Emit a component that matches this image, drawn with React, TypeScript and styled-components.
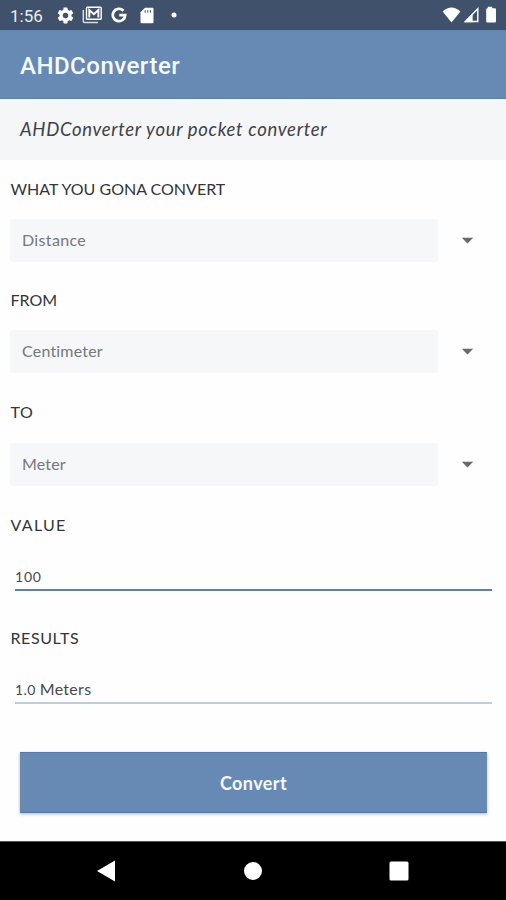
import React, { useState } from "react";
import styled, { createGlobalStyle } from "styled-components";

const GlobalStyle = createGlobalStyle`
  * { box-sizing: border-box; }
  body { margin: 0; background: #fefefe; }
`;

const Screen = styled.div`
  display: flex;
  flex-direction: column;
  width: 100%;
  height: 900px;
  overflow: hidden;
  background: #fefefe;
  font-family: Lato, "Open Sans", sans-serif;
  font-variant-ligatures: none;
`;

const StatusBar = styled.div`
  display: flex;
  align-items: center;
  justify-content: space-between;
  height: 30px;
  padding: 0 8px 0 10px;
  background: #40526b;
  color: #fff;
`;

const StatusGroup = styled.div<{ $gap: number }>`
  display: flex;
  align-items: center;
  gap: ${(p) => p.$gap}px;
  svg { display: block; }
`;

const Clock = styled.span`
  width: 39px;
  font: 400 17px/30px Roboto, sans-serif;
  color: #e9eef4;
  padding-top: 1px;
`;

const AppBar = styled.header`
  display: flex;
  align-items: center;
  height: 69px;
  padding: 2px 20px 0;
  background: #668ab4;
  border-top: 1px solid #6286b2;
  border-bottom: 1px solid #5a7fae;
`;

const Title = styled.h1`
  margin: 0;
  font: 500 24px/30px Roboto, sans-serif;
  letter-spacing: 0.5px;
  color: #f5f9fe;
`;

const Tagline = styled.div`
  height: 61px;
  padding: 0 20px;
  background: #f4f6f8;
  font-size: 18.5px;
  font-style: italic;
  line-height: 61px;
  letter-spacing: 0.68px;
  color: #3f4248;
`;

const Form = styled.main`
  display: flex;
  flex-direction: column;
  flex: 1;
`;

const Group = styled.section<{ $top: number }>`
  display: flex;
  flex-direction: column;
  margin-top: ${(p) => p.$top}px;
`;

const Label = styled.span<{ $spacing?: number }>`
  padding-left: 10.5px;
  font-size: 16px;
  line-height: 20px;
  letter-spacing: ${(p) => p.$spacing ?? 0}px;
  color: #32353b;
`;

const Picker = styled.div<{ $gap: number }>`
  display: flex;
  align-items: center;
  height: 43px;
  margin: ${(p) => p.$gap}px 32px 0 10px;
  gap: 23px;
`;

const PickerText = styled.span<{ $spacing: number }>`
  flex: 1;
  height: 43px;
  padding-left: 12px;
  background: #f5f7f9;
  border-radius: 2px;
  font-size: 16px;
  line-height: 42px;
  letter-spacing: ${(p) => p.$spacing}px;
  color: #74777b;
`;

const Entry = styled.div<{ $active?: boolean }>`
  display: flex;
  align-items: baseline;
  height: 25px;
  margin: 31px 14px 0 15px;
  border-bottom: 2px solid ${(p) => (p.$active ? "#5a82ac" : "#bccddd")};
  font-size: 16px;
  line-height: ${(p) => (p.$active ? 22 : 20)}px;
  letter-spacing: 0.3px;
  color: #47494e;
`;

const Figures = styled.span<{ $spacing: number }>`
  margin-right: 4px;
  font-size: 14px;
  letter-spacing: ${(p) => p.$spacing}px;
`;

const ConvertButton = styled.button`
  height: 61px;
  margin: 48px 19px 0 20px;
  padding: 0;
  border: 0;
  border-top: 1px solid #557baa;
  border-bottom: 1px solid #557baa;
  background: #668ab4;
  box-shadow: 0 1px 3px rgba(60, 70, 80, 0.4);
  font: 700 18px/58px Lato, sans-serif;
  letter-spacing: 0.4px;
  color: #f5f9fe;
`;

const NavBar = styled.nav`
  display: grid;
  grid-template-columns: 1fr 18px 1fr;
  align-items: center;
  height: 59px;
  border-top: 1px solid #555;
  background: #000;
  svg { display: block; }
`;

const NavSlot = styled.div<{ $end?: boolean }>`
  display: flex;
  justify-content: ${(p) => (p.$end ? "flex-end" : "flex-start")};
  padding: ${(p) => (p.$end ? "0 129px 0 0" : "0 0 0 127px")};
`;

function Caret() {
  return (
    <svg width="13" height="7" viewBox="0 0 13 7">
      <path d="M.8.7h11.400L6.500 6.500z" fill="#67696c" />
    </svg>
  );
}

function SettingsIcon() {
  return (
    <svg width="19" height="19" viewBox="0 0 24 24" fill="#fff">
      <path d="M19.43 12.98c.04-.32.07-.64.07-.98s-.03-.66-.07-.98l2.11-1.65c.19-.15.24-.42.12-.64l-2-3.46c-.12-.22-.39-.3-.61-.22l-2.49 1c-.52-.4-1.08-.73-1.69-.98l-.38-2.65A.49.49 0 0 0 14 2h-4c-.25 0-.46.18-.49.42l-.38 2.65c-.61.25-1.17.59-1.69.98l-2.49-1a.49.49 0 0 0-.61.22l-2 3.46c-.13.22-.07.49.12.64l2.11 1.65c-.04.32-.07.65-.07.98s.03.66.07.98l-2.11 1.65c-.19.15-.24.42-.12.64l2 3.46c.12.22.39.3.61.22l2.49-1c.52.4 1.08.73 1.69.98l.38 2.65c.03.24.24.42.49.42h4c.25 0 .46-.18.49-.42l.38-2.65c.61-.25 1.17-.59 1.69-.98l2.49 1c.23.09.49 0 .61-.22l2-3.46a.5.5 0 0 0-.12-.64zM12 15.5a3.5 3.5 0 1 1 0-7 3.5 3.5 0 0 1 0 7z" />
    </svg>
  );
}

function MailIcon() {
  return (
    <svg width="20" height="18" viewBox="0 0 20 18" fill="none">
      <path d="M1.300 4v11.300q0 1.200 1.200 1.200H16" stroke="#d5dce5" strokeWidth="1.500" />
      <rect x="4.500" y="1.200" width="14.700" height="12" rx=".8" stroke="#fff" strokeWidth="1.400" />
      <path d="M7.300 11.500V4l4.550 4.200L16.400 4v7.500" stroke="#fff" strokeWidth="1.900" />
    </svg>
  );
}

function GoogleIcon() {
  return (
    <svg width="16" height="18" viewBox="0 0 16 18" fill="none">
      <path d="M12.500 4.700A6.200 6.200 0 1 0 14.200 9.200H8.300" stroke="#fff" strokeWidth="2.700" />
    </svg>
  );
}

function CardIcon() {
  return (
    <svg width="14" height="17" viewBox="0 0 14 17">
      <path d="M5 .8h7.300q1.200 0 1.200 1.200v13q0 1.200-1.200 1.200H1.700Q.5 16.200.5 15V5.300z" fill="#fff" />
      <path d="M5.200 3.200v2.500M7.800 3.200v2.500M10.400 3.200v2.500" stroke="#40526b" strokeWidth="1" />
    </svg>
  );
}

function Reception() {
  return (
    <svg width="56" height="18" viewBox="0 0 56 18">
      <path d="M.7 5.400Q9.500-2.400 18.400 5.400L9.500 16.500z" fill="#fff" />
      <path d="M23.300 15.500 35.800 2.800v12.700z" fill="none" stroke="#fff" strokeWidth="1.400" />
      <path d="M22.200 16.200 30.600 7.800v8.400z" fill="#fff" />
      <path d="M45.800.8h4.400v1.500h2.600q1.200 0 1.200 1.200v11.700q0 1.200-1.200 1.200h-7.400q-1.200 0-1.200-1.200V3.500q0-1.200 1.200-1.200h.4z" fill="#fff" />
    </svg>
  );
}

type PickGroupProps = {
  top: number;
  gap: number;
  label: string;
  value: string;
  labelSpacing?: number;
  textSpacing?: number;
};

function PickGroup({ top, gap, label, value, labelSpacing = 0, textSpacing = 0 }: PickGroupProps) {
  return (
    <Group $top={top}>
      <Label $spacing={labelSpacing}>{label}</Label>
      <Picker $gap={gap}>
        <PickerText $spacing={textSpacing}>{value}</PickerText>
        <Caret />
      </Picker>
    </Group>
  );
}

export default function App() {
  const [result] = useState({ amount: "1.0", unit: "Meters" });
  return (
    <Screen>
      <GlobalStyle />
      <StatusBar>
        <StatusGroup $gap={7}>
          <Clock>1:56</Clock>
          <SettingsIcon />
          <MailIcon />
          <StatusGroup $gap={13}>
            <StatusGroup $gap={0}>
              <svg width="2" height="1" />
              <GoogleIcon />
            </StatusGroup>
            <StatusGroup $gap={17}>
              <CardIcon />
              <svg width="6" height="6" viewBox="0 0 6 6"><circle cx="3" cy="3" r="2.500" fill="#fff" /></svg>
            </StatusGroup>
          </StatusGroup>
        </StatusGroup>
        <Reception />
      </StatusBar>
      <AppBar>
        <Title>AHDConverter</Title>
      </AppBar>
      <Tagline>AHDConverter your pocket converter</Tagline>
      <Form>
        <PickGroup top={19} gap={20} label="WHAT YOU GONA CONVERT" value="Distance" textSpacing={0.35} />
        <PickGroup top={28} gap={20} label="FROM" value="Centimeter" textSpacing={0.2} />
        <PickGroup top={29} gap={21} label="TO" value="Meter" labelSpacing={0.6} textSpacing={0.15} />
        <Group $top={29}>
          <Label $spacing={1.3}>VALUE</Label>
          <Entry $active><Figures $spacing={0.8}>100</Figures></Entry>
        </Group>
        <Group $top={37}>
          <Label $spacing={0.6}>RESULTS</Label>
          <Entry><Figures $spacing={0.4}>{result.amount}</Figures>{result.unit}</Entry>
        </Group>
        <ConvertButton>Convert</ConvertButton>
      </Form>
      <NavBar>
        <NavSlot $end>
          <svg width="18" height="22" viewBox="0 0 18 22"><path d="M0 11 18 .5v21z" fill="#fff" /></svg>
        </NavSlot>
        <svg width="18" height="18" viewBox="0 0 18 18"><circle cx="9" cy="9" r="9" fill="#fff" /></svg>
        <NavSlot>
          <svg width="20" height="20" viewBox="0 0 20 20"><rect x=".5" y=".5" width="19" height="19" rx="1.500" fill="#fff" /></svg>
        </NavSlot>
      </NavBar>
    </Screen>
  );
}
